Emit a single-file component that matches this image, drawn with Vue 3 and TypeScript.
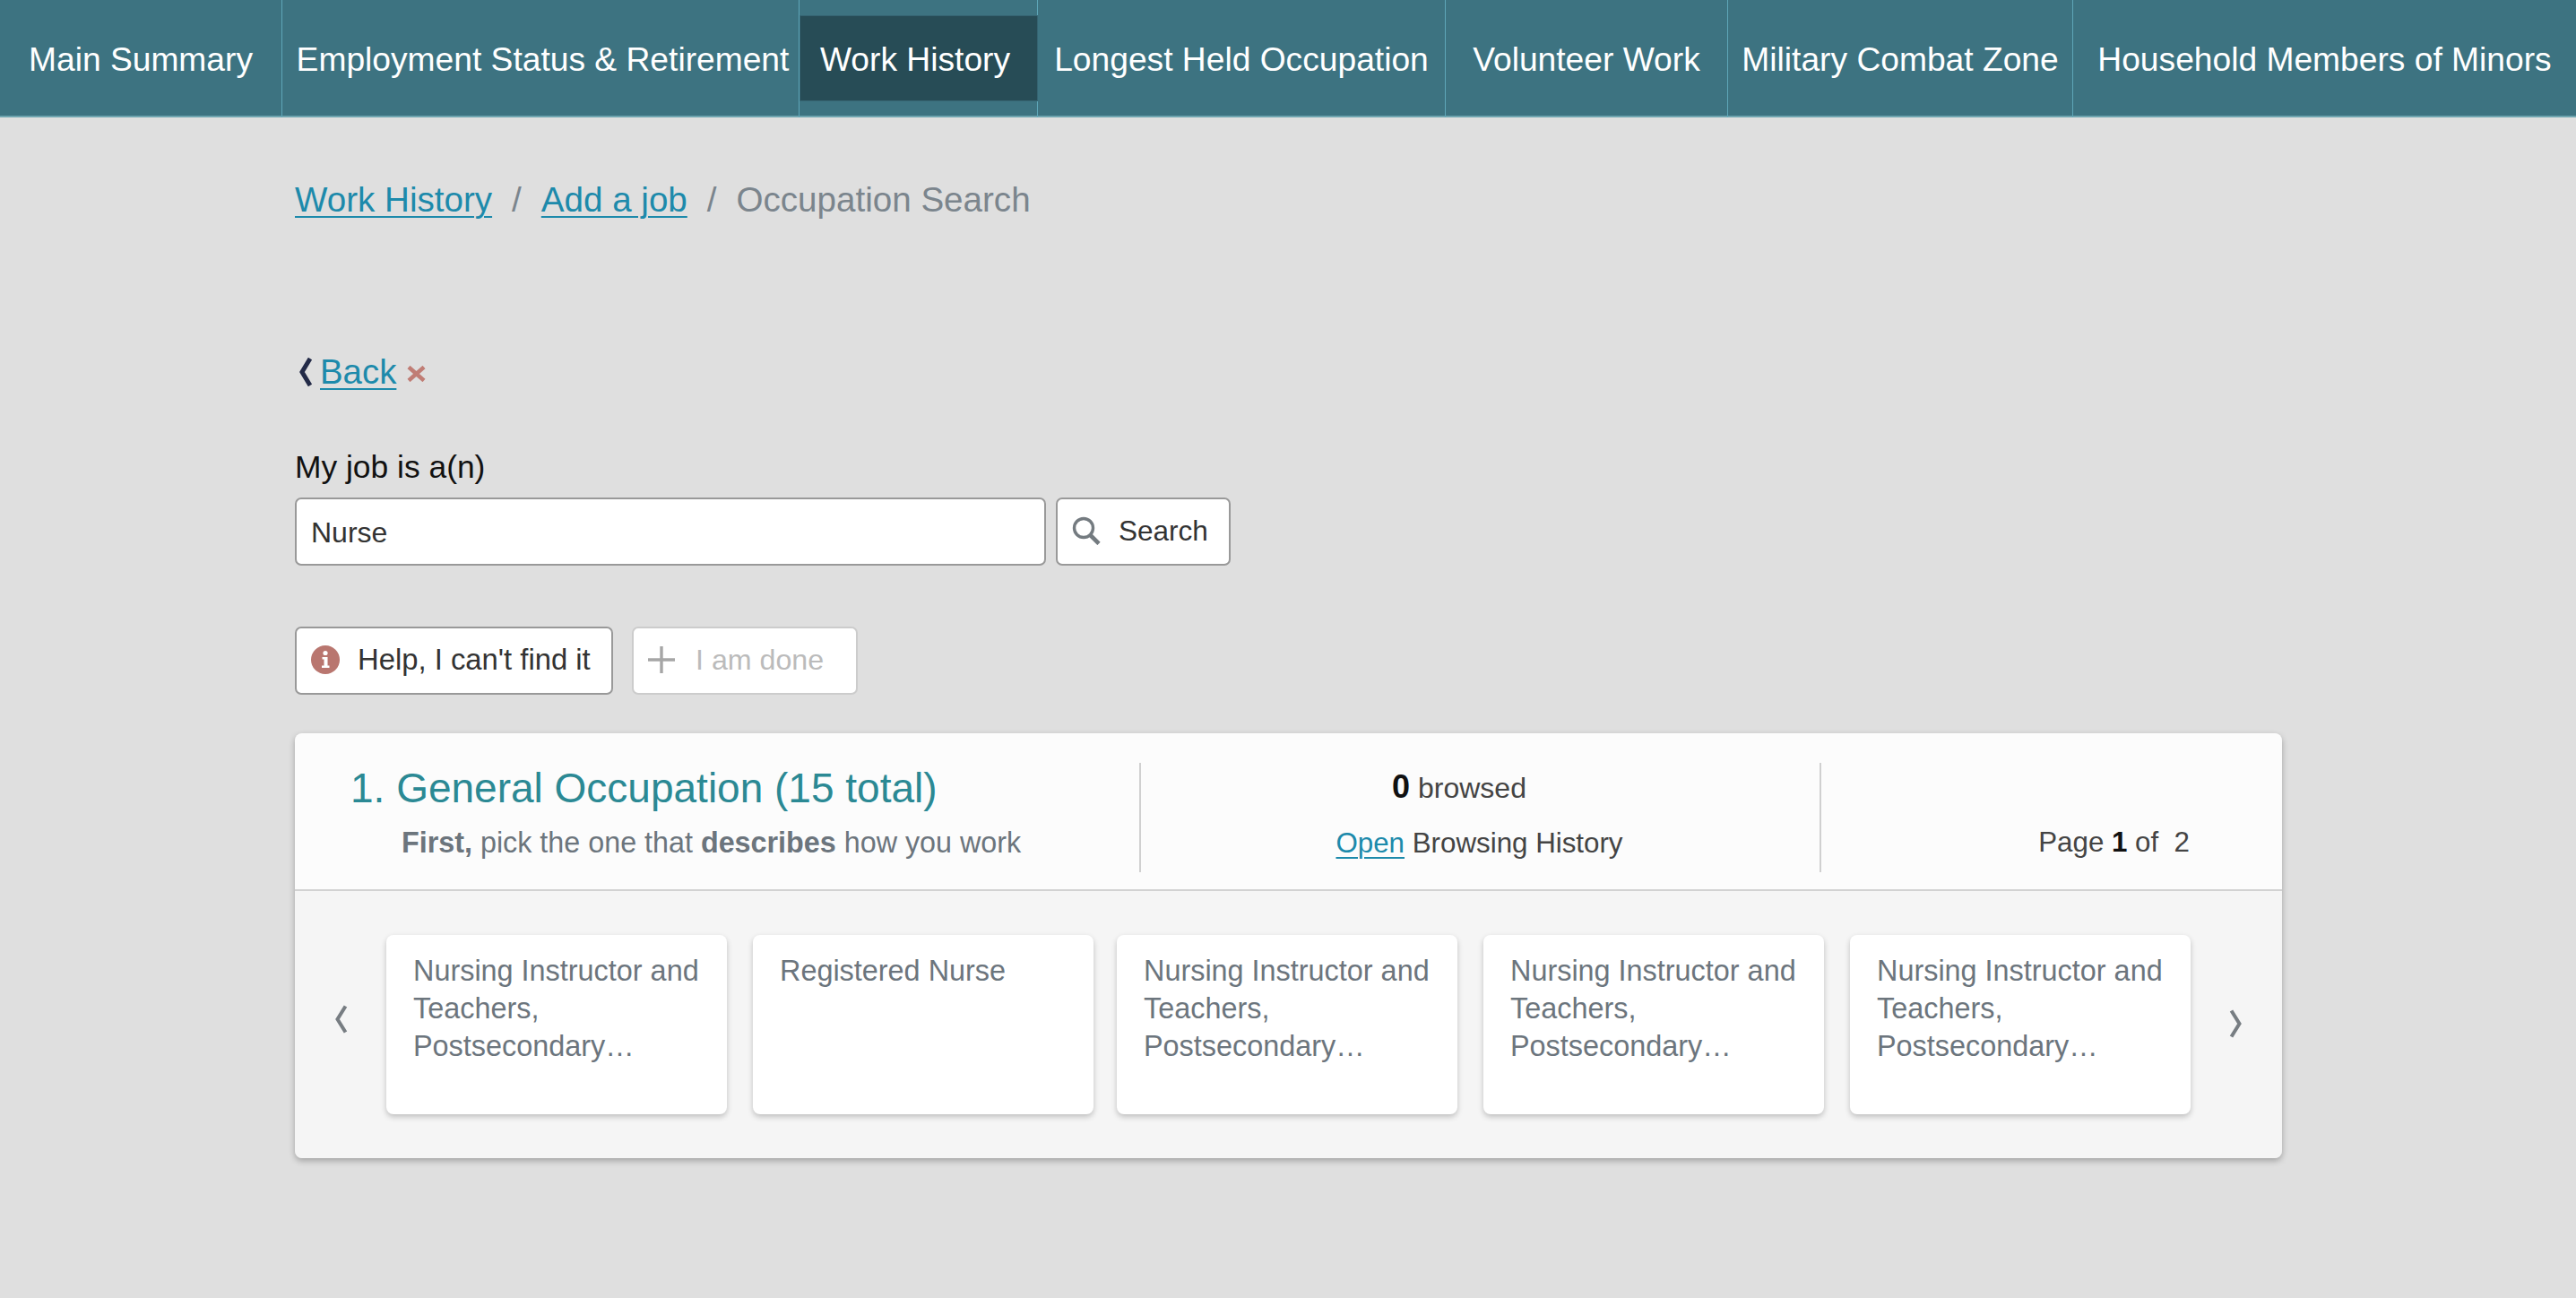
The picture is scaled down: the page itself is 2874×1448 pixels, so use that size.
<script setup lang="ts">
const tabs = [
  { label: "Main Summary", width: 315 },
  { label: "Employment Status & Retirement", width: 577 },
  { label: "Work History", width: 266, active: true },
  { label: "Longest Held Occupation", width: 455 },
  { label: "Volunteer Work", width: 315 },
  { label: "Military Combat Zone", width: 385 },
  { label: "Household Members of Minors", width: 561 },
]

const longName = ["Nursing Instructor and", "Teachers,", "Postsecondary…"]
const occupations = [longName, ["Registered Nurse"], longName, longName, longName]
</script>

<template>
  <div class="page">
    <nav class="tabs">
      <a
        v-for="tab in tabs"
        :key="tab.label"
        class="tab"
        :class="{ 'is-active': tab.active }"
        :style="{ width: tab.width + 'px' }"
      >
        <span class="tab__label">{{ tab.label }}</span>
      </a>
    </nav>

    <main class="content">
      <div class="crumbs">
        <a class="link">Work History</a>
        <span class="crumbs__sep">/</span>
        <a class="link">Add a job</a>
        <span class="crumbs__sep">/</span>
        <span class="crumbs__current">Occupation Search</span>
      </div>

      <div class="back">
        <svg class="back__chevron" viewBox="0 0 15 32" aria-hidden="true">
          <path d="M13 1 L4 16 L13 31" fill="none" stroke="#232a47" stroke-width="5" />
        </svg>
        <a class="link">Back</a>
        <svg class="back__close" viewBox="0 0 21 18" aria-hidden="true">
          <path d="M2 1.5 L19 16.5 M19 1.5 L2 16.5" fill="none" stroke="#c07d75" stroke-width="4.5" />
        </svg>
      </div>

      <label class="job-label">My job is a(n)</label>
      <div class="search">
        <div class="search__input">Nurse</div>
        <button class="btn btn--search">
          <svg class="btn__glass" viewBox="0 0 33 32" aria-hidden="true">
            <circle cx="13" cy="13" r="10.5" fill="none" stroke="#747b80" stroke-width="3.4" />
            <path d="M20.5 21 L30 30.5" fill="none" stroke="#747b80" stroke-width="4.6" />
          </svg>
          Search
        </button>
      </div>

      <div class="actions">
        <button class="btn btn--help">
          <svg class="btn__info" viewBox="0 0 32 32" aria-hidden="true">
            <circle cx="16" cy="16" r="16" fill="#b9766f" />
            <circle cx="16" cy="8.5" r="2.6" fill="#fff" />
            <path d="M12.5 13 H18.5 V22.5 H20.5 V25 H12 V22.5 H14.5 V15.5 H12.5 Z" fill="#fff" />
          </svg>
          Help, I can't find it
        </button>
        <button class="btn btn--done">
          <svg class="btn__plus" viewBox="0 0 30 30" aria-hidden="true">
            <path d="M15 0 V30 M0 15 H30" fill="none" stroke="#a6a6a6" stroke-width="3.4" />
          </svg>
          I am done
        </button>
      </div>

      <section class="panel">
        <header class="panel__head">
          <div class="panel__intro">
            <h2 class="panel__title">1. General Occupation (15 total)</h2>
            <p class="panel__hint"><b>First,</b> pick the one that <b>describes</b> how you work</p>
          </div>
          <div class="panel__browse">
            <div class="panel__count"><b>0</b> browsed</div>
            <div class="panel__history"><a class="link">Open</a> Browsing History</div>
          </div>
          <div class="panel__page">Page <b>1</b> of&nbsp; 2</div>
        </header>

        <div class="panel__body">
          <svg class="arrow arrow--prev" viewBox="0 0 15 32" aria-hidden="true">
            <path d="M12.5 1.5 L3.5 16 L12.5 30.5" fill="none" stroke="#777d82" stroke-width="4" />
          </svg>
          <div class="cards">
            <article v-for="(lines, i) in occupations" :key="i" class="card">
              <div v-for="line in lines" :key="line">{{ line }}</div>
            </article>
          </div>
          <svg class="arrow arrow--next" viewBox="0 0 15 32" aria-hidden="true">
            <path d="M2.5 1.5 L11.5 16 L2.5 30.5" fill="none" stroke="#777d82" stroke-width="4" />
          </svg>
        </div>
      </section>
    </main>
  </div>
</template>

<style>
html,
body {
  margin: 0;
  background: #dfdfdf;
}
</style>

<style scoped>
.page {
  min-height: 1448px;
  font-family: "Liberation Sans", Arial, sans-serif;
  background: #dfdfdf;
  color: #333;
  overflow: hidden;
}

.tabs {
  display: flex;
  height: 129px;
  background: #3d7381;
  border-bottom: 2px solid #6fa5b0;
}

.tab {
  box-sizing: border-box;
  height: 131px;
  flex: none;
  padding: 18px 0 19px;
  border-right: 1px solid #5ea6b8;
  display: flex;
  color: #fff;
  font-size: 37.2px;
}

.tab:last-child {
  border-right: 0;
}

.tab:nth-child(2) .tab__label {
  padding-left: 5px;
}

.tab__label {
  flex: 1;
  display: flex;
  align-items: center;
  justify-content: center;
  padding-top: 3px;
  white-space: nowrap;
}

.tab.is-active .tab__label {
  margin-left: 1px;
  padding-right: 8px;
  background: #274c56;
  box-shadow: 0 0 0 1px #356472;
}

.content {
  width: 2217px;
  margin-left: 329px;
}

.link {
  color: #1d8aab;
  text-decoration: underline;
  text-underline-offset: 5px;
  text-decoration-thickness: 2px;
}

.crumbs {
  display: flex;
  gap: 22px;
  margin-top: 70px;
  font-size: 38.6px;
  line-height: 44px;
}

.crumbs__sep,
.crumbs__current {
  color: #7b858d;
}

.back {
  display: flex;
  align-items: center;
  margin-top: 148px;
  padding-left: 4px;
  font-size: 38.4px;
  line-height: 44px;
}

.back__chevron {
  width: 15px;
  height: 32px;
  margin-right: 9px;
}

.back__close {
  width: 21px;
  height: 18px;
  margin: 4px 0 0 12px;
}

.job-label {
  display: block;
  margin-top: 62px;
  font-size: 35.4px;
  line-height: 44px;
  color: #111;
}

.search {
  display: flex;
  gap: 11px;
  margin-top: 12px;
}

.search__input {
  box-sizing: border-box;
  width: 838px;
  height: 76px;
  padding: 2px 16px 0;
  display: flex;
  align-items: center;
  background: #fff;
  border: 2px solid #999;
  border-radius: 7px;
  font-size: 32px;
}

.btn {
  box-sizing: border-box;
  height: 76px;
  display: flex;
  align-items: center;
  background: #fff;
  border: 2px solid #999;
  border-radius: 7px;
  padding: 0 0 2px;
  color: #333;
  font: 32.8px "Liberation Sans", Arial, sans-serif;
}

.btn--search {
  width: 195px;
  padding-left: 16px;
  font-size: 31.5px;
}

.btn__glass {
  width: 33px;
  height: 32px;
  margin-right: 19px;
}

.actions {
  display: flex;
  gap: 21px;
  margin-top: 68px;
}

.btn--help {
  width: 355px;
  padding-left: 16px;
}

.btn__info {
  width: 32px;
  height: 32px;
  margin-right: 20px;
}

.btn--done {
  width: 252px;
  padding-left: 16px;
  border-color: #ccc;
  color: #bbb;
  font-size: 32.2px;
}

.btn__plus {
  width: 30px;
  height: 30px;
  margin-right: 23px;
}

.panel {
  margin-top: 43px;
  height: 474px;
  border-radius: 8px;
  overflow: hidden;
  box-shadow: 0 3px 7px rgba(0, 0, 0, 0.28);
}

.panel__head {
  box-sizing: border-box;
  height: 176px;
  padding-top: 31px;
  display: flex;
  background: #fcfcfc;
  border-bottom: 2px solid #d2d2d2;
}

.panel__intro {
  width: 942px;
  padding-left: 62px;
  box-sizing: border-box;
}

.panel__title {
  margin: 2px 0 0;
  color: #2b8994;
  font-size: 46px;
  font-weight: 400;
  line-height: 56px;
}

.panel__hint {
  margin: 13px 0 0 57px;
  color: #6c757d;
  font-size: 32.3px;
  line-height: 40px;
}

.panel__browse {
  box-sizing: border-box;
  width: 761px;
  height: 122px;
  margin-top: 2px;
  border-left: 2px solid #d0d0d0;
  border-right: 2px solid #d0d0d0;
  text-align: center;
  font-size: 31.3px;
  line-height: 40px;
  color: #444;
}

.panel__browse b {
  color: #111;
  font-size: 36px;
}

.panel__count {
  padding: 7px 0 22px;
  margin-right: 47px;
  font-size: 32px;
}

.panel__history {
  margin-right: 2px;
}

.panel__page {
  flex: 1;
  padding: 71px 103px 0 0;
  text-align: right;
  font-size: 31.3px;
  line-height: 40px;
  color: #444;
}

.panel__page b {
  color: #111;
}

.panel__body {
  height: 298px;
  display: flex;
  align-items: center;
  background: #f5f5f5;
}

.arrow {
  flex: none;
  width: 15px;
  height: 32px;
}

.arrow--prev {
  margin: 0 43px 12px 44px;
}

.arrow--next {
  margin: 0 0 2px 43px;
}

.cards {
  display: flex;
  gap: 29px;
}

.card {
  box-sizing: border-box;
  width: 380px;
  height: 200px;
  padding: 19px 20px 0 30px;
  background: #fff;
  border-radius: 8px;
  box-shadow: 0 3px 6px rgba(0, 0, 0, 0.22);
  color: #6c757d;
  font-size: 32.4px;
  line-height: 42px;
  white-space: nowrap;
}

.card:nth-child(3) {
  margin-left: -3px;
}
</style>
